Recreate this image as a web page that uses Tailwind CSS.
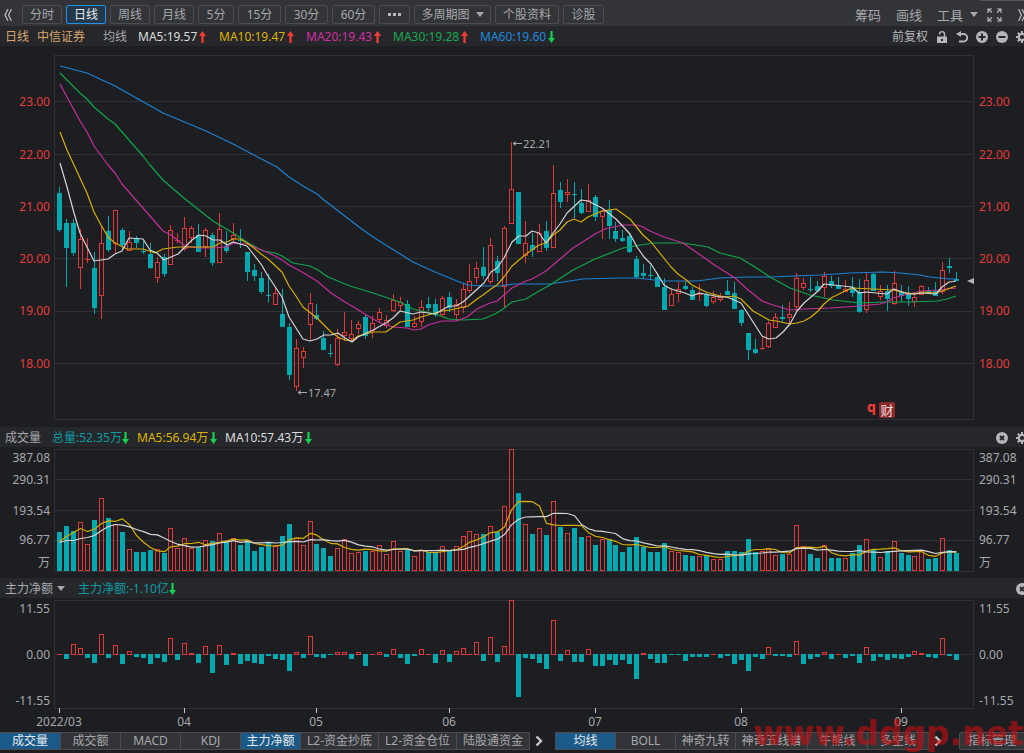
<!DOCTYPE html>
<html lang="zh-CN">

<head>
  <meta charset="UTF-8" />
  <meta name="viewport" content="width=device-width, initial-scale=1.0" />
  <title>中信证券 日线</title>
  <script src="https://cdn.jsdelivr.net/npm/@tailwindcss/browser@4"></script>
</head>

<body class="relative min-h-screen overflow-x-hidden bg-[#1d1e22] font-['Noto_Sans','Noto_Sans_CJK_SC',sans-serif] text-xs text-[#a6a8ab]">

  <!-- shared icons -->
  <svg class="hidden">
    <symbol id="up" viewBox="0 0 7 12"><path d="M3.5 0L7 5H4.6V12H2.4V5H0Z" fill="#ff3b35" /></symbol>
    <symbol id="down" viewBox="0 0 7 12"><path d="M3.5 12L7 7H4.6V0H2.4V7H0Z" fill="#14cf50" /></symbol>
    <symbol id="caret" viewBox="0 0 8 5"><path d="M0 0H8L4 5Z" fill="currentColor" /></symbol>
    <symbol id="next" viewBox="0 0 8 12"><path d="M1.5 1.5L6 6L1.5 10.500" fill="none" stroke="currentColor" stroke-width="2.4" /></symbol>
    <symbol id="close" viewBox="0 0 12 12"><circle cx="6" cy="6" r="6" fill="currentColor" /><path d="M4 4L8 8M8 4L4 8" stroke="#26272b" stroke-width="1.8" /></symbol>
    <symbol id="gear" viewBox="0 0 12 12">
      <circle cx="6" cy="6" r="3.200" fill="none" stroke="currentColor" stroke-width="2.200" />
      <path d="M6 0V2.500M6 9.500V12M0 6H2.500M9.500 6H12M1.800 1.800L3.500 3.500M8.500 8.500L10.200 10.200M10.200 1.800L8.500 3.500M3.500 8.500L1.800 10.200" stroke="currentColor" stroke-width="2" />
    </symbol>
  </svg>

  <!-- period toolbar -->
  <nav class="relative flex h-[26px] items-center overflow-hidden bg-[#333438] pt-[3px] pl-1">
    <button aria-label="向左" class="w-[18px] shrink-0">
      <svg class="h-3 w-2" viewBox="0 0 8 12" fill="none" stroke="#c0c2c5" stroke-width="1.2"><path d="M4 0L1 6L4 12M7.500 0L4.500 6L7.500 12" /></svg>
    </button>
    <div class="flex shrink-0 gap-1 leading-4">
      <button class="h-[19px] w-10 rounded-xs border border-[#4b4c50]">分时</button>
      <button class="h-[19px] w-10 rounded-xs border border-[#2391e6] bg-[#23394b] text-[#e8eaec]">日线</button>
      <button class="h-[19px] w-10 rounded-xs border border-[#4b4c50]">周线</button>
      <button class="h-[19px] w-10 rounded-xs border border-[#4b4c50]">月线</button>
      <button class="h-[19px] w-9 rounded-xs border border-[#4b4c50]">5分</button>
      <button class="h-[19px] w-[43px] rounded-xs border border-[#4b4c50]">15分</button>
      <button class="h-[19px] w-[43px] rounded-xs border border-[#4b4c50]">30分</button>
      <button class="h-[19px] w-[43px] rounded-xs border border-[#4b4c50]">60分</button>
      <button aria-label="更多" class="flex h-[19px] w-[31px] items-center justify-center rounded-xs border border-[#4b4c50]">
        <svg class="h-[3px] w-[13px]" viewBox="0 0 13 3" fill="#b4b6b9"><path d="M0 0H3V3H0ZM5 0H8V3H5ZM10 0H13V3H10Z" /></svg>
      </button>
      <button class="flex h-[19px] w-[77px] items-center justify-center gap-[6px] rounded-xs border border-[#4b4c50]">多周期图<svg class="h-[5px] w-2"><use href="#caret" /></svg></button>
      <button class="h-[19px] w-16 rounded-xs border border-[#4b4c50]">个股资料</button>
      <button class="h-[19px] w-[41px] rounded-xs border border-[#4b4c50]">诊股</button>
    </div>
    <div class="-mr-[2px] ml-auto flex shrink-0 items-center text-[13px] leading-4">
      <button class="mr-[15px]">筹码</button>
      <button class="mr-[15px]">画线</button>
      <button class="mr-[9px] flex items-center gap-[7px]">工具<svg class="h-[5px] w-2"><use href="#caret" /></svg></button>
      <button aria-label="全屏" class="mr-4">
        <svg class="h-[14px] w-[15px]" viewBox="0 0 15 14" fill="none" stroke="#b4b6b9" stroke-width="1.200"><path d="M1 5V1H5M10 1H14V5M14 9V13H10M5 13H1V9M1 1L5 4.500M14 1L10 4.500M14 13L10 9.500M1 13L5 9.500" /></svg>
      </button>
      <button aria-label="向右">
        <svg class="h-3 w-2" viewBox="0 0 8 12" fill="none" stroke="#c0c2c5" stroke-width="1.200"><path d="M.5 0L3.500 6L.5 12M4 0L7 6L4 12" /></svg>
      </button>
    </div>
    <div class="absolute top-0 right-0 h-px w-11 bg-[#55565a]"></div>
  </nav>

  <!-- moving average legend -->
  <header class="flex h-5 items-center overflow-hidden bg-[#26272b] pt-px pl-[5px] leading-5">
    <span class="w-8 shrink-0 text-[#d8a56c]">日线</span>
    <span class="w-[66px] shrink-0 text-[#d8a56c]">中信证券</span>
    <span class="w-[35px] shrink-0">均线</span>
    <span class="flex w-[81px] shrink-0 items-center gap-[2px] text-[#dcdcdc]">MA5:19.57<svg class="h-3 w-[7px]"><use href="#up" /></svg></span>
    <span class="flex w-[87px] shrink-0 items-center gap-[2px] text-[#dcb400]">MA10:19.47<svg class="h-3 w-[7px]"><use href="#up" /></svg></span>
    <span class="flex w-[87px] shrink-0 items-center gap-[2px] text-[#d02fa2]">MA20:19.43<svg class="h-3 w-[7px]"><use href="#up" /></svg></span>
    <span class="flex w-[87px] shrink-0 items-center gap-[2px] text-[#18a84c]">MA30:19.28<svg class="h-3 w-[7px]"><use href="#up" /></svg></span>
    <span class="flex shrink-0 items-center gap-[2px] text-[#2089de]">MA60:19.60<svg class="h-3 w-[7px]"><use href="#down" /></svg></span>
    <div class="-mr-1 ml-auto flex shrink-0 items-center gap-2 text-[#b4b6b9]">
      <button>前复权</button>
      <button aria-label="锁定"><svg class="h-3 w-3" viewBox="0 0 12 12"><path d="M3.500 3.500V3A2.500 2.200 0 0 1 8.500 3V6" fill="none" stroke="currentColor" stroke-width="1.500" /><path d="M1 5.500H11V12H1Z" fill="currentColor" /><path d="M5 8H7V10H5Z" fill="#26272b" /></svg></button>
      <button aria-label="撤销"><svg class="h-3 w-3" viewBox="0 0 12 12"><path d="M3 3H7.500A3.500 3.500 0 0 1 7.500 10.500H3" fill="none" stroke="currentColor" stroke-width="1.800" /><path d="M0 3L5 0V6Z" fill="currentColor" /></svg></button>
      <button aria-label="放大"><svg class="h-3 w-3" viewBox="0 0 12 12"><circle cx="6" cy="6" r="6" fill="currentColor" /><path d="M6 2.500V9.500M2.500 6H9.500" stroke="#26272b" stroke-width="2" /></svg></button>
      <button aria-label="缩小"><svg class="h-3 w-3" viewBox="0 0 12 12"><circle cx="6" cy="6" r="6" fill="currentColor" /><path d="M2.500 6H9.500" stroke="#26272b" stroke-width="2" /></svg></button>
      <button aria-label="设置"><svg class="h-3 w-3"><use href="#gear" /></svg></button>
    </div>
  </header>

  <svg id="price" class="block h-[381px] w-full"></svg>

  <section class="flex h-5 items-center overflow-hidden bg-[#26272b] pt-px pl-[5px] leading-5">
    <span class="w-[47px] shrink-0">成交量</span>
    <span class="flex w-[85px] shrink-0 items-center text-[#0e9ba2]">总量:52.35万<svg class="h-3 w-[7px]"><use href="#down" /></svg></span>
    <span class="flex w-[88px] shrink-0 items-center gap-[2px] text-[#dcb400]">MA5:56.94万<svg class="h-3 w-[7px]"><use href="#down" /></svg></span>
    <span class="flex shrink-0 items-center gap-[2px] text-[#dcdcdc]">MA10:57.43万<svg class="h-3 w-[7px]"><use href="#down" /></svg></span>
    <div class="-mr-1 ml-auto flex gap-2 text-[#b4b6b9]">
      <button aria-label="关闭成交量"><svg class="h-3 w-3"><use href="#close" /></svg></button>
      <button aria-label="成交量设置"><svg class="h-3 w-3"><use href="#gear" /></svg></button>
    </div>
  </section>

  <svg id="volume" class="block h-[131px] w-full"></svg>

  <section class="flex h-5 items-center overflow-hidden bg-[#26272b] pt-px pl-[5px] leading-5">
    <button class="flex w-[73px] shrink-0 items-center gap-1">主力净额<svg class="h-[5px] w-2"><use href="#caret" /></svg></button>
    <span class="flex shrink-0 items-center text-[#0e9ba2]">主力净额:-1.10亿<svg class="h-3 w-[7px]"><use href="#down" /></svg></span>
    <button aria-label="关闭主力净额" class="-mr-1 ml-auto text-[#b4b6b9]"><svg class="h-3 w-3"><use href="#close" /></svg></button>
  </section>

  <svg id="flow" class="block h-[133px] w-full"></svg>

  <!-- indicator tabs -->
  <footer class="flex h-[22px] items-start overflow-hidden pt-px leading-4">
    <div class="flex shrink-0 divide-x divide-[#4b4c50] border-y border-r border-[#4b4c50] bg-[#333438]">
      <button class="w-[61px] bg-[#1b5a88] text-[#e8eaec]">成交量</button>
      <button class="w-[60px]">成交额</button>
      <button class="w-[60px]">MACD</button>
      <button class="w-[60px]">KDJ</button>
      <button class="w-[60px] bg-[#1b5a88] text-[#e8eaec]">主力净额</button>
      <button class="w-[78px]">L2-资金抄底</button>
      <button class="w-[78px]">L2-资金仓位</button>
      <button class="w-[72px]">陆股通资金</button>
    </div>
    <button aria-label="更多副图指标" class="flex h-[18px] w-[25px] shrink-0 items-center pl-[5px] text-[#c4c6c9]"><svg class="h-3 w-2"><use href="#next" /></svg></button>
    <div class="flex shrink-0 divide-x divide-[#4b4c50] border border-[#4b4c50] bg-[#333438]">
      <button class="w-[60px] bg-[#1b5a88] text-[#e8eaec]">均线</button>
      <button class="w-[60px]">BOLL</button>
      <button class="w-[60px]">神奇九转</button>
      <button class="w-[72px]">神奇五线谱</button>
      <button class="w-[60px]">牛熊线</button>
      <button class="w-[60px]">多空线</button>
    </div>
    <button aria-label="更多主图指标" class="flex h-[18px] w-[30px] shrink-0 items-center pl-[5px] text-[#c4c6c9]"><svg class="h-3 w-2"><use href="#next" /></svg></button>
    <button class="h-[18px] w-[66px] shrink-0 rounded-xs border border-[#4b4c50] bg-[#333438]">指标管理</button>
  </footer>

  <div class="pointer-events-none absolute right-0 bottom-0 h-[38px] w-[271px] overflow-hidden font-['DejaVu_Sans',sans-serif] text-[33px] leading-[38px] font-bold whitespace-nowrap text-[#c80c10]/60">www.ddgp.net</div>

  <script>
    const RED = "#e0393a", TEAL = "#00a8b0", GRID = "#303135", TEXT = "#a6a8ab";
    const COUNT = 130;

    // [high, body top, body bottom, low, rising]
    const candles = [
      [187,193,230,232,0],[219,223,248,287,0],[219,223,253,256,0],[229,239,268,289,1],[238,259,260,263,1],
      [252,268,308,314,0],[226,243,296,319,1],[216,231,250,252,0],[210,210,244,254,1],[228,230,245,250,0],
      [231,242,251,251,1],[236,238,243,248,0],[241,251,252,254,0],[243,254,268,269,0],[257,262,278,283,1],
      [254,257,274,277,0],[225,230,265,265,1],[233,240,241,243,1],[217,228,249,251,1],[226,228,238,243,1],
      [224,235,252,252,0],[228,230,247,257,1],[233,235,263,266,0],[213,229,263,263,1],[231,246,251,253,0],
      [223,235,239,242,1],[229,240,241,248,0],[252,252,272,281,0],[264,270,276,281,0],[272,278,292,294,0],
      [274,295,296,302,0],[287,293,305,305,1],[289,314,327,327,0],[323,327,375,380,0],[339,348,387,391,1],
      [347,351,358,368,1],[293,303,325,341,1],[304,315,319,320,0],[331,338,350,350,0],[344,353,354,357,0],
      [329,338,365,366,1],[312,332,336,341,1],[320,334,339,341,1],[321,324,329,334,1],[315,317,336,339,0],
      [316,323,331,338,1],[308,312,320,323,1],[315,320,326,328,1],[294,300,311,312,1],[297,302,306,311,1],
      [300,304,327,327,0],[316,323,327,328,1],[300,307,322,327,1],[297,304,308,311,0],[299,304,315,317,0],
      [296,298,315,316,1],[292,297,308,312,0],[299,304,315,321,1],[283,289,308,313,1],[264,281,291,293,1],
      [262,268,278,284,1],[247,267,276,279,0],[238,245,282,284,1],[256,261,273,281,0],[226,228,287,307,1],
      [142,189,224,224,1],[192,192,244,244,0],[221,243,256,263,1],[233,245,250,257,0],[224,233,252,252,1],
      [221,231,248,251,0],[165,193,248,248,1],[182,190,202,208,0],[179,192,195,202,1],[182,194,195,218,0],
      [189,203,213,214,0],[184,200,212,212,1],[195,197,217,221,0],[210,211,217,239,1],[200,210,226,239,0],
      [222,231,239,242,0],[230,238,241,242,0],[233,236,252,253,0],[256,259,277,279,0],[264,273,276,279,0],
      [265,275,276,279,0],[273,277,287,287,0],[278,287,310,310,0],[288,294,306,306,1],[282,289,294,302,1],
      [282,286,289,290,0],[287,290,300,300,0],[284,294,295,301,1],[293,294,306,307,0],[291,297,302,304,1],
      [293,297,300,302,1],[280,291,295,295,0],[282,293,309,309,0],[309,310,323,326,0],[333,333,350,360,0],
      [339,349,353,354,0],[337,348,349,350,1],[321,323,347,348,1],[313,317,328,328,1],[305,317,319,322,0],
      [302,314,318,324,1],[273,278,307,312,1],[278,283,288,290,1],[277,289,290,292,0],[281,286,291,291,0],
      [272,276,288,297,1],[276,281,286,288,0],[277,286,289,289,0],[280,289,292,292,1],[277,287,293,297,0],
      [279,292,312,313,0],[272,280,310,313,1],[273,274,291,291,0],[285,291,297,300,1],[285,291,299,311,0],
      [271,283,304,305,1],[285,292,296,302,0],[286,294,299,306,0],[292,297,302,307,1],[285,286,295,295,1],
      [287,291,293,294,0],[282,291,296,296,0],[262,270,292,294,1],[258,266,268,273,0],[272,279,281,281,0]
    ];

    const volumes = [
      39,45,40,49,27,51,73,53,47,39,22,19,19,21,22,18,43,23,33,23,24,31,30,38,30,33,26,31,20,24,28,25,35,
      47,33,26,50,27,23,15,23,32,18,19,20,20,26,17,30,20,21,15,21,19,19,25,21,25,35,40,37,37,45,39,65,122,
      78,47,37,43,36,70,44,38,43,34,35,26,32,32,26,19,24,34,24,19,19,28,20,19,16,15,15,16,12,12,20,20,19,
      32,19,20,23,16,17,17,46,25,17,13,26,13,13,13,18,26,32,22,14,20,30,18,16,15,20,12,13,33,21,18
    ];

    const flows = [
      0,-5,10,6,-4,-9,20,-4,9,-10,3,-3,-4,-10,-4,-8,16,-6,11,1,-9,8,-19,9,-11,1,-10,-7,-9,-10,-2,-5,-6,
      -17,2,-4,18,-3,-4,-1,2,2,-5,2,-12,0,2,-3,5,-4,-10,-2,5,0,-9,4,-8,3,6,0,12,-7,17,-8,8,54,
      -43,-4,-5,-9,-15,34,-7,4,-8,-8,5,-12,-12,-6,-11,-6,-10,-25,1,-5,-9,-9,-1,-1,-7,-3,-3,-3,0,-4,-2,-10,-6,
      -17,-3,-5,7,-2,-2,-3,13,-10,-5,-3,2,-5,0,-4,-2,-9,7,-7,-3,-6,-4,-5,-3,3,1,-3,-4,16,-2,-6
    ];

    const averages = [
      ["#1c82d2", "60,66 87,73 115,86 163,113 206,131 233,144 250,153 277,167 289,177 303,186 317,194 324,200 359,227 373,237 413,262 435,272 457,281 468,285 483,286 500,286 513,284 550,284 583,279 617,278 637,278 663,281 697,281 720,278 747,277 770,277 820,275 850,273 883,272 900,273 920,275 930,277 950,279 957,279"],
      ["#12a44c", "60,73 80,93 87,99 94,107 108,119 115,124 143,156 150,165 163,180 185,199 213,221 233,233 250,244 263,251 275,253 282,256 293,263 310,266 318,270 328,277 350,286 373,293 400,302 413,309 435,314 449,319 463,320 483,319 495,314 503,309 512,302 526,299 539,291 550,285 573,270 595,259 623,248 653,243 683,243 708,247 720,253 740,258 755,267 770,277 790,288 810,295 833,300 860,303 883,302 910,302 937,301 947,299 956,296"],
      ["#c42f9a", "60,84 67,97 80,121 87,132 94,146 108,165 115,173 122,184 136,200 143,208 163,231 171,235 185,246 199,248 213,248 227,247 233,243 247,244 262,250 275,256 282,260 289,265 302,272 317,281 331,293 345,302 352,306 373,319 383,324 393,327 407,328 414,330 421,329 428,325 442,321 456,321 467,317 477,309 490,303 497,301 512,288 526,281 532,279 546,271 553,265 573,248 581,243 595,234 605,229 623,225 637,225 643,227 650,231 664,237 683,243 699,254 713,264 735,278 747,289 762,301 770,304 783,308 790,310 803,309 830,308 860,306 880,304 887,302 893,298 908,294 922,291 937,290 956,288"],
      ["#d8ae06", "60,132 67,150 74,165 80,178 87,193 94,212 101,225 108,237 115,243 127,249 143,249 155,253 163,249 178,247 192,247 213,247 220,243 227,242 233,239 240,239 247,243 254,248 261,254 268,259 282,272 289,286 296,296 303,307 317,318 331,332 338,337 345,340 352,341 358,336 373,332 386,332 400,322 413,320 421,317 435,313 442,311 450,310 468,306 477,299 483,295 491,289 497,285 504,277 512,266 526,254 539,245 546,243 553,235 560,230 567,222 574,219 581,222 588,217 595,214 602,211 616,209 630,219 643,235 651,242 671,267 678,274 685,279 692,285 706,292 720,296 727,297 734,296 741,299 753,311 762,316 769,320 776,321 790,324 797,323 804,321 811,317 818,311 824,304 831,298 845,291 852,288 873,289 894,290 901,292 908,293 915,294 922,292 936,293 942,291 956,286"],
      ["#d6d6d6", "60,163 67,187 74,213 80,233 87,247 94,261 108,259 115,254 122,251 129,238 143,239 150,250 157,253 164,260 171,257 178,254 185,247 192,240 199,235 206,236 213,240 220,240 227,245 233,242 247,246 254,255 261,264 268,276 282,297 289,317 303,339 310,341 317,339 324,335 331,335 338,333 345,338 352,342 358,337 373,330 386,323 393,318 400,311 413,314 421,312 435,314 442,310 449,306 456,306 463,302 484,283 491,272 497,268 504,258 512,242 519,236 526,236 532,231 539,233 546,243 553,233 560,224 567,213 581,200 588,201 602,208 616,219 630,234 637,247 644,257 651,264 658,275 664,285 671,289 685,293 692,296 699,293 720,297 727,297 741,303 762,336 769,339 776,338 783,332 790,324 797,311 804,303 818,291 824,284 852,287 859,293 866,292 887,294 894,289 908,294 915,294 922,293 936,294 942,287 949,282 956,281"]
    ];

    const months = [[0, "2022/03"], [18, "04"], [37, "05"], [56, "06"], [77, "07"], [98, "08"], [121, "09"]];

    let W = 1024;
    const left = 54.5;
    const plotRight = () => W - 50.5;
    const sx = x => 60 + (x - 60) * (W - 128) / 896;
    const bx = i => Math.floor(59.7 + i * (W - 127) / (COUNT - 1));

    const rect = (x, y, w, h, c) => `<rect x="${x}" y="${y}" width="${w}" height="${h}" fill="${c}"/>`;
    const label = (x, y, t, c, anchor = "start", size = 12) =>
      `<text x="${x}" y="${y}" fill="${c}" text-anchor="${anchor}" font-size="${size}">${t}</text>`;
    const line = (pts, c) =>
      `<polyline points="${pts}" fill="none" stroke="${c}" stroke-width="1.200" stroke-linejoin="round"/>`;

    function bar(i, top, bottom, rising) {
      const x = bx(i) - 2, h = bottom - top;
      if (!rising) return rect(x, top, 5, Math.max(h, 1), TEAL);
      if (h < 3) return rect(x, top, 5, Math.max(h, 1), RED);
      return `<rect x="${x + .5}" y="${top + .5}" width="4" height="${h - 1}" fill="none" stroke="${RED}"/>`;
    }

    function frame(top, bottom, rows) {
      let s = `<rect x="${left}" y="${top}" width="${plotRight() - left}" height="${bottom - top}" fill="none" stroke="${GRID}"/>`;
      rows.forEach(y => s += rect(left, y, plotRight() - left, 1, GRID));
      return s;
    }

    function sideLabels(rows, c) {
      return rows.map(([y, t]) => label(50, y, t, c, "end") + label(W - 45, y, t, c)).join("");
    }

    function put(id, top, height, content) {
      const el = document.getElementById(id);
      el.setAttribute("viewBox", `0 ${top} ${W} ${height}`);
      el.innerHTML = content;
    }

    function drawPrice() {
      let s = frame(55.5, 419.5, [101, 154, 206, 258, 311, 363]);
      s += sideLabels([[106, "23.00"], [159, "22.00"], [211, "21.00"], [263, "20.00"], [315, "19.00"], [368, "18.00"]], "#e23c38");
      candles.forEach(([hi, top, bottom, lo, up], i) => {
        const c = up ? RED : TEAL;
        if (top > hi) s += rect(bx(i), hi, 1, top - hi, c);
        if (lo > bottom) s += rect(bx(i), bottom, 1, lo - bottom, c);
        s += bar(i, top, bottom, up);
      });
      averages.forEach(([c, pts]) => {
        s += line(pts.split(" ").map(p => { const [x, y] = p.split(","); return sx(+x) + "," + y; }).join(" "), c);
      });
      [[65, 143.5, "22.21"], [34, 392.5, "17.47"]].forEach(([i, y, t]) => {
        const x = bx(i) + 2;
        s += `<path d="M${x + 9} ${y}H${x}M${x + 3} ${y - 2}L${x} ${y}L${x + 3} ${y + 2}" fill="none" stroke="${TEXT}"/>`;
        s += label(x + 10, y + 4, t, TEXT, "start", 11);
      });
      s += `<path d="M${W - 57} 281L${W - 50} 278V284Z" fill="#b4b6b9"/>`;
      s += `<text x="${W - 157}" y="412" fill="#ff3b35" font-size="14" font-weight="700">q</text>`;
      s += `<rect x="${W - 145}" y="402" width="16" height="16" rx="2" fill="#8a2a2c"/>`;
      s += label(W - 137, 415, "财", "#f0dede", "middle", 13);
      put("price", 46, 381, s);
    }

    function rolling(n, head) {
      return volumes.map((v, i) => {
        const avg = i < head.length ? head[i] : volumes.slice(i - n + 1, i + 1).reduce((a, b) => a + b, 0) / n;
        return (bx(i) + .5) + "," + (571.5 - avg);
      }).join(" ");
    }

    function drawVolume() {
      let s = frame(449.5, 571.5, [479, 510, 540]);
      s += sideLabels([[462, "387.08"], [484, "290.31"], [515, "193.54"], [544, "96.77"], [567, "万"]], TEXT);
      volumes.forEach((v, i) => s += bar(i, 571 - v, 571, candles[i][4]));
      s += line(rolling(5, [30, 35, 39, 43]), "#d8ae06");
      s += line(rolling(10, [29, 31, 31, 33, 34, 36, 41, 45, 47]), "#d6d6d6");
      put("volume", 447, 131, s);
    }

    function drawFlow() {
      let s = frame(600.5, 708.5, [654]);
      s += sideLabels([[613, "11.55"], [659, "0.00"], [705, "-11.55"]], TEXT);
      flows.forEach((v, i) => s += v < 0 ? bar(i, 654, 654 - v, 0) : bar(i, 654 - v, 655, 1));
      months.forEach(([i, t]) => s += rect(bx(i), 708, 1, 5, "#c4c6c9") + label(bx(i), 726, t, TEXT, "middle"));
      put("flow", 598, 133, s);
    }

    function draw() {
      W = document.documentElement.clientWidth;
      drawPrice();
      drawVolume();
      drawFlow();
    }

    window.addEventListener("resize", draw);
    draw();
  </script>
</body>

</html>
